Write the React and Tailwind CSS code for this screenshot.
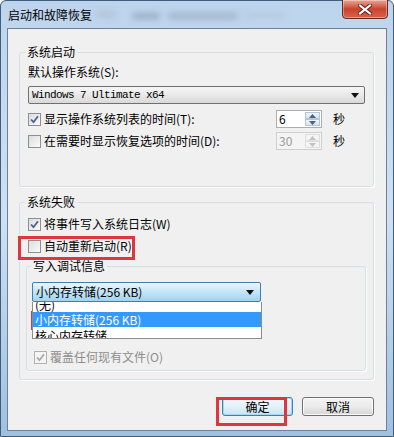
import React from 'react';

const cjk = "font-['Noto_Sans_CJK_SC','Noto_Sans',sans-serif]";

function CheckBox({ checked, disabled }) {
  return (
    <span
      className={`flex h-[13px] w-[13px] shrink-0 items-center justify-center border ${
        disabled ? 'border-[#b1b1b1] bg-[#f4f4f4]' : 'border-[#8e8f8f] bg-gradient-to-br from-[#dcdcdc] to-[#fbfbfb]'
      }`}
    >
      {checked && (
        <svg width="9" height="9" viewBox="0 0 9 9">
          <path
            d="M1 4.5 L3.5 7.2 L8 1.2"
            fill="none"
            stroke={disabled ? '#a8a8a8' : '#4a5f97'}
            strokeWidth="1.8"
          />
        </svg>
      )}
    </span>
  );
}

function CheckRow({ label, checked, disabled, className = '' }) {
  return (
    <div className={`flex h-[16px] items-center gap-[3px] ${className}`}>
      <CheckBox checked={checked} disabled={disabled} />
      <span className={`whitespace-nowrap ${disabled ? 'text-[#8d8d8d]' : 'text-black'}`}>{label}</span>
    </div>
  );
}

function Spinner({ value, disabled }) {
  return (
    <div
      className={`flex h-[18px] w-[46px] items-stretch border ${
        disabled ? 'border-[#cfcfcf] bg-[#f4f4f4] text-[#9a9a9a]' : 'border-[#abadb3] bg-white text-black'
      }`}
    >
      <span className="flex-1 pl-[2px] leading-[16px]">{value}</span>
      <div className="my-[1px] mr-[1px] flex w-[15px] flex-col">
        {[0, 1].map((i) => (
          <span
            key={i}
            className={`flex flex-1 items-center justify-center border ${
              disabled ? 'border-[#dedede] bg-[#f4f4f4]' : 'border-[#b4c6d8] bg-gradient-to-b from-[#f1f5f9] to-[#d6e2ee]'
            }`}
          >
            <svg width="7" height="4" viewBox="0 0 7 4">
              <path
                d={i === 0 ? 'M0 4 L3.5 0 L7 4Z' : 'M0 0 L3.5 4 L7 0Z'}
                fill={disabled ? '#c3c3c3' : '#4d6185'}
              />
            </svg>
          </span>
        ))}
      </div>
    </div>
  );
}

function Arrow() {
  return (
    <svg width="8" height="5" viewBox="0 0 8 5">
      <path d="M0 0 L8 0 L4 5Z" fill="#111" />
    </svg>
  );
}

function Legend({ children }) {
  return <legend className="-ml-[3px] px-[2px] leading-[16px]">{children}</legend>;
}

export default function App() {
  return (
    <div className={`h-[437px] w-[394px] overflow-hidden bg-white ${cjk} text-[12px] leading-[14px]`}>
      <div className="flex h-full w-full flex-col rounded-t-[6px] border border-[#3f5d7c] bg-gradient-to-b from-[#bcd4ed] via-[#cfe0f2] to-[#9fc0df] px-[6px] pb-[5px]">
        {/* title bar */}
        <div className="relative flex h-[27px] shrink-0 items-center">
          <span className="ml-[1px] mt-[1px] text-[12px] text-black">启动和故障恢复</span>
          <span className="ml-[4px] h-[7px] w-[20px] rounded-full bg-[#b3c4d6] blur-[3px]" />
          <span className="ml-[16px] mt-[2px] h-[6px] w-[28px] rounded-full bg-[#98abc0] blur-[3px]" />
          <span className="ml-[8px] mt-[2px] h-[6px] w-[70px] rounded-full bg-[#9fb2c7] blur-[3px]" />
          <span className="ml-[6px] mt-[2px] h-[5px] w-[40px] rounded-full bg-[#b6c8da] blur-[3px]" />
          <div className="absolute right-[-1px] top-[-2px] flex h-[20px] w-[46px] items-center justify-center rounded-b-[4px] border border-[#6b2a20] bg-gradient-to-b from-[#e7a797] via-[#c8432d] to-[#d9634c] shadow-[inset_0_0_0_1px_rgba(255,255,255,0.35)]">
            <svg width="14" height="11" viewBox="0 0 14 11">
              <path d="M2 1.5 L12 9.5 M12 1.5 L2 9.5" stroke="#5a1e14" strokeWidth="4" strokeLinecap="square" />
              <path d="M2 1.5 L12 9.5 M12 1.5 L2 9.5" stroke="#fff" strokeWidth="2.2" strokeLinecap="square" />
            </svg>
          </div>
        </div>

        {/* client area */}
        <div className="relative flex-1 border border-[#6d8199] bg-[#f0f0f0] pl-[11px] pr-[12px] pt-[15px]">
          <fieldset className="rounded-[3px] border border-[#d5dfe5] pb-[36px] pl-[8px] pr-[8px] shadow-[1px_1px_0_#fff]">
            <Legend>系统启动</Legend>
            <div className="mt-[5px]">默认操作系统(S):</div>
            <div className="mt-[7px] flex h-[18px] items-center justify-between rounded-[2px] border border-[#707070] bg-gradient-to-b from-[#f6f6f6] via-[#e9e9e9] to-[#d9d9d9] pl-[3px] pr-[5px]">
              <span className="font-['Liberation_Mono',monospace] text-[11px] tracking-[-0.6px]">Windows 7 Ultimate x64</span>
              <Arrow />
            </div>
            <div className="mt-[6px] flex items-center">
              <div className="flex-1">
                <CheckRow checked label="显示操作系统列表的时间(T):" />
              </div>
              <Spinner value="6" />
              <span className="ml-[11px] mr-[20px]">秒</span>
            </div>
            <div className="mt-[4px] flex items-center">
              <div className="flex-1">
                <CheckRow label="在需要时显示恢复选项的时间(D):" />
              </div>
              <Spinner value="30" disabled />
              <span className="ml-[11px] mr-[20px]">秒</span>
            </div>
          </fieldset>

          <fieldset className="mt-[7px] rounded-[3px] border border-[#d5dfe5] pb-[8px] pl-[8px] pr-[7px] shadow-[1px_1px_0_#fff]">
            <Legend>系统失败</Legend>
            <CheckRow checked label="将事件写入系统日志(W)" className="mt-[6px]" />
            <CheckRow label="自动重新启动(R)" className="mt-[6px]" />

            <fieldset className="-ml-[2px] mt-[4px] rounded-[3px] border border-[#d5dfe5] pb-[5px] pl-[5px] pr-[8px] shadow-[1px_1px_0_#fff]">
              <legend className="-ml-[1px] px-[2px] leading-[16px]">写入调试信息</legend>
              <div className="relative mt-[8px] w-[229px]">
                <div className="flex h-[20px] items-center justify-between rounded-[2px] border border-[#3c7fb1] bg-gradient-to-b from-[#eaf6fd] via-[#c4e5f8] to-[#9fd3f2] pl-[3px] pr-[6px]">
                  <span>小内存转储(256 KB)</span>
                  <Arrow />
                </div>
                {/* open drop-down list */}
                <div className="absolute left-0 top-full z-10 h-[37px] w-[230px] overflow-hidden border border-t-0 border-[#8b8b8b] bg-white">
                  <div className="-mt-[5px]">
                    <div className="h-[15px] pl-[2px] leading-[15px]">(无)</div>
                    <div className="h-[15px] bg-[#3399ff] pl-[2px] leading-[15px] text-white">小内存转储(256 KB)</div>
                    <div className="h-[15px] pl-[2px] leading-[17px]">核心内存转储</div>
                  </div>
                </div>
              </div>
              <CheckRow checked disabled label="覆盖任何现有文件(O)" className="ml-[2px] mt-[47px]" />
            </fieldset>
          </fieldset>

          <div className="mt-[17px] flex justify-end gap-[9px]">
            <button className="h-[19px] w-[71px] rounded-[3px] border border-[#3c7fb1] bg-gradient-to-b from-[#f2f9fd] via-[#e3f1f9] to-[#c9e3f2] text-[12px] leading-none shadow-[inset_0_0_0_1px_#9ddcf7]">
              确定
            </button>
            <button className="h-[19px] w-[72px] rounded-[3px] border border-[#707070] bg-gradient-to-b from-[#f4f4f4] via-[#ebebeb] to-[#d6d6d6] text-[12px] leading-none shadow-[inset_0_0_0_1px_#fbfbfb]">
              取消
            </button>
          </div>

          {/* red annotation boxes */}
          <div className="pointer-events-none absolute left-[10px] top-[207px] h-[24px] w-[117px] border-[3px] border-[#e0353f]" />
          <div className="pointer-events-none absolute left-[23px] top-[282px] h-[19px] w-[212px] border-[3px] border-[#e0353f]" />
          <div className="pointer-events-none absolute left-[208px] top-[368px] h-[29px] w-[71px] border-[3px] border-[#e0353f]" />
        </div>
      </div>
    </div>
  );
}
